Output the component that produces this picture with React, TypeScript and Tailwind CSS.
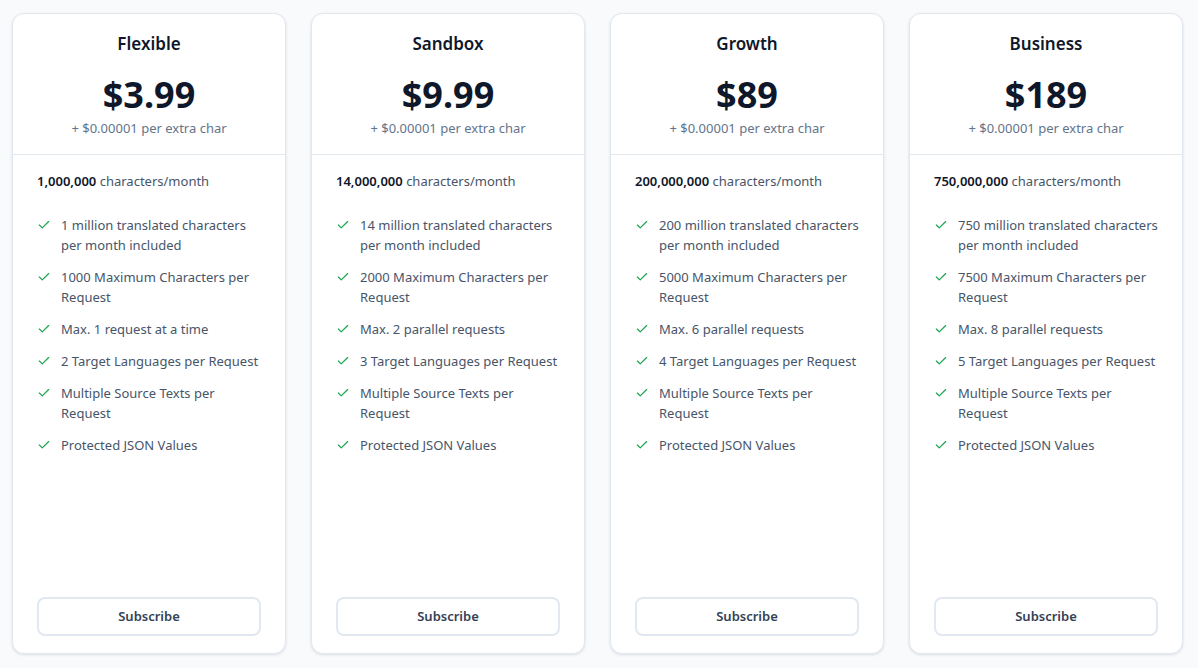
import { Check } from 'lucide-react';

type Plan = {
  name: string;
  price: string;
  chars: string;
  features: string[];
};

const plans: Plan[] = [
  {
    name: 'Flexible',
    price: '$3.99',
    chars: '1,000,000',
    features: [
      '1 million translated characters per month included',
      '1000 Maximum Characters per Request',
      'Max. 1 request at a time',
      '2 Target Languages per Request',
      'Multiple Source Texts per Request',
      'Protected JSON Values',
    ],
  },
  {
    name: 'Sandbox',
    price: '$9.99',
    chars: '14,000,000',
    features: [
      '14 million translated characters per month included',
      '2000 Maximum Characters per Request',
      'Max. 2 parallel requests',
      '3 Target Languages per Request',
      'Multiple Source Texts per Request',
      'Protected JSON Values',
    ],
  },
  {
    name: 'Growth',
    price: '$89',
    chars: '200,000,000',
    features: [
      '200 million translated characters per month included',
      '5000 Maximum Characters per Request',
      'Max. 6 parallel requests',
      '4 Target Languages per Request',
      'Multiple Source Texts per Request',
      'Protected JSON Values',
    ],
  },
  {
    name: 'Business',
    price: '$189',
    chars: '750,000,000',
    features: [
      '750 million translated characters per month included',
      '7500 Maximum Characters per Request',
      'Max. 8 parallel requests',
      '5 Target Languages per Request',
      'Multiple Source Texts per Request',
      'Protected JSON Values',
    ],
  },
];

function PlanCard({ plan }: { plan: Plan }) {
  return (
    <div className="flex h-[641px] w-[274px] flex-col rounded-xl border border-[#e2e8f0] bg-white shadow-[0_1px_3px_rgba(15,23,42,0.12)]">
      <div className="border-b border-[#e2e8f0] pt-4 pb-4 text-center">
        <h3 className="text-[17px] leading-7 font-semibold text-[#0f172a]">{plan.name}</h3>
        <p className="mt-[17px] text-4xl leading-10 font-bold text-[#0f172a]">{plan.price}</p>
        <p className="mt-[3px] text-[13px] leading-5 text-[#64748b]">+ $0.00001 per extra char</p>
      </div>
      <div className="flex flex-1 flex-col px-6 pt-4 pb-[17px]">
        <p className="text-[13px] leading-5 text-[#475569]">
          <span className="font-semibold text-[#0f172a]">{plan.chars}</span> characters/month
        </p>
        <ul className="mt-6 space-y-3">
          {plan.features.map((f) => (
            <li key={f} className="flex items-start gap-[10px] text-[13px] leading-5 text-[#475569]">
              <Check className="mt-[3px] h-[14px] w-[14px] shrink-0 text-[#16a34a]" strokeWidth={2} />
              <span>{f}</span>
            </li>
          ))}
        </ul>
        <button className="mt-auto h-[39px] w-full rounded-lg border-2 border-[#e2e8f0] bg-white pt-px text-[13px] font-semibold text-[#334155]">
          Subscribe
        </button>
      </div>
    </div>
  );
}

export default function App() {
  return (
    <div
      className="flex min-h-[668px] gap-[25px] bg-[#f8fafc] pt-[13px] pl-3"
      style={{ fontFamily: '"Noto Sans", "Open Sans", sans-serif' }}
    >
      {plans.map((p) => (
        <PlanCard key={p.name} plan={p} />
      ))}
    </div>
  );
}
